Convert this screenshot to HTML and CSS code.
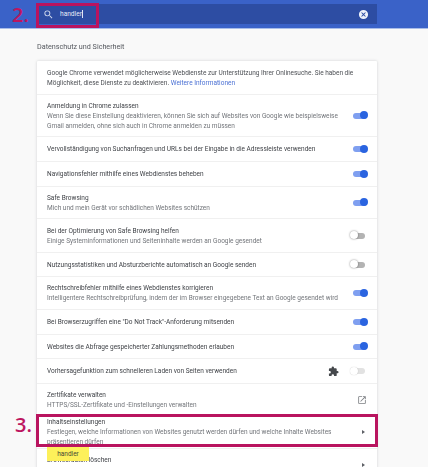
FILE: index.html
```html
<!DOCTYPE html>
<html lang="de">
<head>
<meta charset="utf-8">
<title>Einstellungen</title>
<link rel="stylesheet" href="styles.css">
</head>
<body>
<div class="page">
  <header class="topbar">
    <div class="search">
      <svg class="search-icon" viewBox="0 0 24 24"><path d="M15.5 14h-.79l-.28-.27A6.471 6.471 0 0 0 16 9.500 6.500 6.500 0 1 0 9.500 16c1.610 0 3.090-.59 4.230-1.570l.27.28v.79l5 4.990L20.490 19l-4.990-5zm-6 0C7.010 14 5 11.990 5 9.500S7.010 5 9.500 5 14 7.010 14 9.500 11.990 14 9.500 14z"/></svg>
      <span class="query">handler</span><span class="caret"></span>
      <svg class="clear-icon" viewBox="0 0 24 24"><path d="M12 2a10 10 0 1 0 0 20 10 10 0 0 0 0-20zm5 13.600L15.600 17 12 13.400 8.400 17 7 15.600 10.600 12 7 8.400 8.400 7 12 10.600 15.600 7 17 8.400 13.400 12z"/></svg>
    </div>
  </header>
  <main class="content">
    <h2 class="section-title">Datenschutz und Sicherheit</h2>
    <section class="card">
      <div class="row h33"><div class="text"><div class="sub">Google Chrome verwendet möglicherweise Webdienste zur Unterstützung Ihrer Onlinesuche. Sie haben die Möglichkeit, diese Dienste zu deaktivieren. <a class="link">Weitere Informationen</a></div></div></div>
      <div class="row h42"><div class="text"><div class="label">Anmeldung in Chrome zulassen</div><div class="sub">Wenn Sie diese Einstellung deaktivieren, können Sie sich auf Websites von Google wie beispielsweise Gmail anmelden, ohne sich auch in Chrome anmelden zu müssen</div></div><span class="toggle on"></span></div>
      <div class="row h25"><div class="text"><div class="label">Vervollständigung von Suchanfragen und URLs bei der Eingabe in die Adressleiste verwenden</div></div><span class="toggle on"></span></div>
      <div class="row h25"><div class="text"><div class="label">Navigationsfehler mithilfe eines Webdienstes beheben</div></div><span class="toggle on"></span></div>
      <div class="row h32"><div class="text"><div class="label">Safe Browsing</div><div class="sub">Mich und mein Gerät vor schädlichen Websites schützen</div></div><span class="toggle on"></span></div>
      <div class="row h34"><div class="text"><div class="label">Bei der Optimierung von Safe Browsing helfen</div><div class="sub">Einige Systeminformationen und Seiteninhalte werden an Google gesendet</div></div><span class="toggle off"></span></div>
      <div class="row h24"><div class="text"><div class="label">Nutzungsstatistiken und Absturzberichte automatisch an Google senden</div></div><span class="toggle off"></span></div>
      <div class="row h33"><div class="text"><div class="label">Rechtschreibfehler mithilfe eines Webdienstes korrigieren</div><div class="sub">Intelligentere Rechtschreibprüfung, indem der im Browser eingegebene Text an Google gesendet wird</div></div><span class="toggle on"></span></div>
      <div class="row h25"><div class="text"><div class="label">Bei Browserzugriffen eine "Do Not Track"-Anforderung mitsenden</div></div><span class="toggle on"></span></div>
      <div class="row h24"><div class="text"><div class="label">Websites die Abfrage gespeicherter Zahlungsmethoden erlauben</div></div><span class="toggle on"></span></div>
      <div class="row h25"><div class="text"><div class="label">Vorhersagefunktion zum schnelleren Laden von Seiten verwenden</div></div>
        <svg class="puzzle" viewBox="0 0 24 24"><path d="M20.500 11H19V7a2 2 0 0 0-2-2h-4V3.500a2.500 2.500 0 0 0-5 0V5H4a2 2 0 0 0-2 2v3.800h1.500a2.700 2.700 0 0 1 0 5.400H2V20a2 2 0 0 0 2 2h3.800v-1.500a2.700 2.700 0 0 1 5.400 0V22H17a2 2 0 0 0 2-2v-4h1.500a2.500 2.500 0 0 0 0-5z"/></svg>
        <span class="toggle off disabled"></span></div>
      <div class="row h32"><div class="text"><div class="label">Zertifikate verwalten</div><div class="sub">HTTPS/SSL-Zertifikate und -Einstellungen verwalten</div></div>
        <svg class="external" viewBox="0 0 24 24"><path d="M19 19H5V5h7V3H5a2 2 0 0 0-2 2v14a2 2 0 0 0 2 2h14a2 2 0 0 0 2-2v-7h-2v7zM14 3v2h3.600l-9.800 9.800 1.400 1.400L19 6.400V10h2V3h-7z"/></svg></div>
      <div class="row h33"><div class="text narrow"><div class="label">Inhaltseinstellungen</div><div class="sub">Festlegen, welche Informationen von Websites genutzt werden dürfen und welche Inhalte Websites präsentieren dürfen</div></div><span class="arrow"></span></div>
      <div class="row h33"><div class="text narrow"><div class="label">Browserdaten löschen</div><div class="sub">Cookies und andere Websitedaten löschen und den Cache leeren</div></div><span class="arrow"></span></div>
    </section>
  </main>
  <div class="mark step2">2.</div>
  <div class="frame frame-search"></div>
  <div class="mark step3">3.</div>
  <div class="frame frame-content"></div>
  <div class="bubble">handler</div>
</div>
</body>
</html>
```
FILE: styles.css
```css
* { box-sizing: border-box; }
html, body { margin: 0; padding: 0; }
body {
  width: 428px;
  height: 467px;
  overflow: hidden;
  background: #f9f9f9;
  font-family: Roboto, "Liberation Sans", sans-serif;
}
.page { position: relative; width: 428px; height: 467px; overflow: hidden; }
.topbar {
  height: 29px;
  padding: 4px 51px 4px 37px;
  background: #3a62c8;
  border-bottom: 1px solid #a9bde8;
}
.search {
  height: 20px;
  display: flex;
  align-items: center;
  padding: 0 8px 0 6px;
  background: #2d4da3;
  color: #fff;
}
.search-icon { width: 11px; height: 11px; fill: #d5ddf0; margin-right: 6px; }
.query { font-size: 6.600px; color: #e6ebf7; }
.caret { width: 1px; height: 8px; background: #dfe6f5; }
.clear-icon { width: 11px; height: 11px; fill: #eef2fa; margin-left: auto; }
.content { padding: 0 51px 0 37px; filter: blur(0.3px); }
.section-title {
  margin: 0;
  height: 32px;
  padding-top: 12px;
  font-size: 7.200px;
  line-height: 12px;
  font-weight: 400;
  color: #55585e;
}
.card {
  background: #fff;
  border-radius: 1px;
  box-shadow: 0 0 3px rgba(60, 64, 67, .22);
}
.row {
  display: flex;
  align-items: center;
  padding: 0 10px;
  border-top: 1px solid #f0f0f0;
}
.row:first-child { border-top: 0; }
.h24 { height: 24px; }
.h25 { height: 25px; }
.h32 { height: 32px; }
.h33 { height: 33px; }
.h34 { height: 34px; }
.h42 { height: 42px; }
.text { flex: 1; min-width: 0; }
.text.narrow { padding-right: 10px; }
.label { font-size: 6.500px; line-height: 10px; color: #3c3f44; white-space: nowrap; }
.sub { font-size: 6.500px; line-height: 10px; color: #72757a; }
.row:first-child .sub { color: #4c4f54; }
.link { color: #4a70d4; }
.toggle {
  position: relative;
  flex: none;
  width: 14px;
  height: 6px;
  margin-right: 0;
  border-radius: 3px;
}
.toggle::after {
  content: "";
  position: absolute;
  top: -1.500px;
  width: 8px;
  height: 8px;
  border-radius: 50%;
}
.toggle.on { background: #7f9ff0; margin-left: 12px; }
.toggle.on::after { right: -0.500px; background: #2a64e0; }
.toggle.off { background: #b3b3b3; margin-left: 10px; margin-right: 2px; }
.toggle.off::after { left: -1px; background: #fff; box-shadow: 0 0 2px rgba(0, 0, 0, .5); }
.toggle.disabled { background: #e2e2e2; }
.toggle.disabled::after { box-shadow: 0 0 1px rgba(0, 0, 0, .25); }
.puzzle { width: 11px; height: 11px; fill: #45484c; flex: none; margin-right: 2px; }
.external { width: 10px; height: 10px; fill: #7c7f83; flex: none; }
.arrow {
  flex: none;
  width: 0;
  height: 0;
  margin: 0 2px 0 0;
  border-top: 2px solid transparent;
  border-bottom: 2px solid transparent;
  border-left: 3px solid #5d6066;
}
.mark {
  position: absolute;
  font-family: "Open Sans", sans-serif;
  font-size: 20px;
  font-weight: 600;
  line-height: 20px;
  color: #bd1660;
}
.step2 { left: 12px; top: 5px; }
.step3 { left: 15px; top: 415px; }
.frame { position: absolute; border: 3px solid #b9145f; }
.frame-search { left: 36px; top: 3px; width: 63px; height: 25px; }
.frame-content { left: 36px; top: 414px; width: 342px; height: 33px; }
.bubble {
  position: absolute;
  left: 47px;
  top: 447px;
  width: 42px;
  height: 14px;
  background: #fdf05a;
  text-align: center;
  font-size: 6.500px;
  line-height: 14px;
  color: #4a4a35;
}
```
